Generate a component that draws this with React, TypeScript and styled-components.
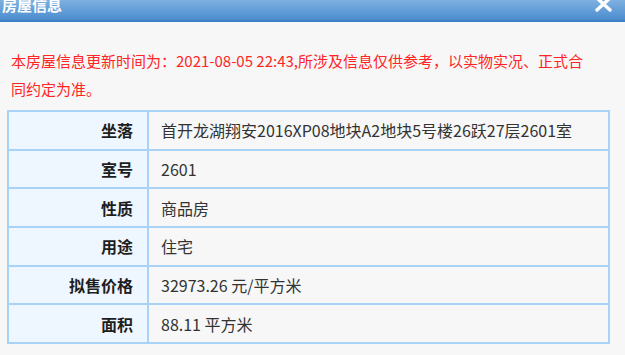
import React from "react";
import styled, { createGlobalStyle } from "styled-components";

const Global = createGlobalStyle`
  html, body { margin: 0; padding: 0; background: #f7f7f7; }
  body { font-family: "Noto Sans CJK SC", "Noto Sans", sans-serif; }
`;

const Window = styled.div`
  width: 625px;
  height: 355px;
  background: #f7f7f7;
  overflow: hidden;
  display: flex;
  flex-direction: column;
`;

const TitleBar = styled.div`
  height: 20px;
  flex: none;
  display: flex;
  align-items: flex-start;
  justify-content: space-between;
  padding: 0 13px 0 2px;
  background: linear-gradient(to bottom, #7fb0e0 0%, #5f9bd6 60%, #4d8ccd 100%);
  border-bottom: 2px solid #3f80c9;
  overflow: hidden;
`;

const Title = styled.span`
  color: #fff;
  font-size: 15px;
  font-weight: 700;
  line-height: 15px;
  margin-top: -3px;
`;

const Close = styled.svg`
  margin-top: -4px;
  flex: none;
`;

const Body = styled.div`
  padding: 25px 0 0 0;
`;

const Notice = styled.p`
  margin: 0 0 7px 0;
  padding: 0 28px 0 11px;
  color: #ff2525;
  font-size: 15px;
  line-height: 28px;
`;

const Table = styled.table`
  margin-left: 7px;
  width: 603px;
  border-collapse: collapse;
  border: 2px solid #a8d3f6;
`;

const Row = styled.tr`
  height: 38.67px;
`;

const Label = styled.th`
  width: 124px;
  padding: 0 14px 0 0;
  text-align: right;
  font-weight: 700;
  font-size: 16px;
  color: #1e1e1e;
  background: #eef6ff;
  border: 2px solid #a8d3f6;
`;

const Value = styled.td`
  padding: 0 0 0 12px;
  text-align: left;
  font-size: 16px;
  color: #333;
  background: #f7f7f7;
  border: 2px solid #a8d3f6;
`;

const rows: [string, string][] = [
  ["坐落", "首开龙湖翔安2016XP08地块A2地块5号楼26跃27层2601室"],
  ["室号", "2601"],
  ["性质", "商品房"],
  ["用途", "住宅"],
  ["拟售价格", "32973.26 元/平方米"],
  ["面积", "88.11 平方米"],
];

export default function App() {
  return (
    <Window>
      <Global />
      <TitleBar>
        <Title>房屋信息</Title>
        <Close width="17" height="16" viewBox="0 0 17 16">
          <path d="M2 2 L15 14 M15 2 L2 14" stroke="#fff" strokeWidth="3.4" strokeLinecap="round" />
        </Close>
      </TitleBar>
      <Body>
        <Notice>
          本房屋信息更新时间为：2021-08-05 22:43,所涉及信息仅供参考，以实物实况、正式合同约定为准。
        </Notice>
        <Table>
          <tbody>
            {rows.map(([k, v]) => (
              <Row key={k}>
                <Label>{k}</Label>
                <Value>{v}</Value>
              </Row>
            ))}
          </tbody>
        </Table>
      </Body>
    </Window>
  );
}
